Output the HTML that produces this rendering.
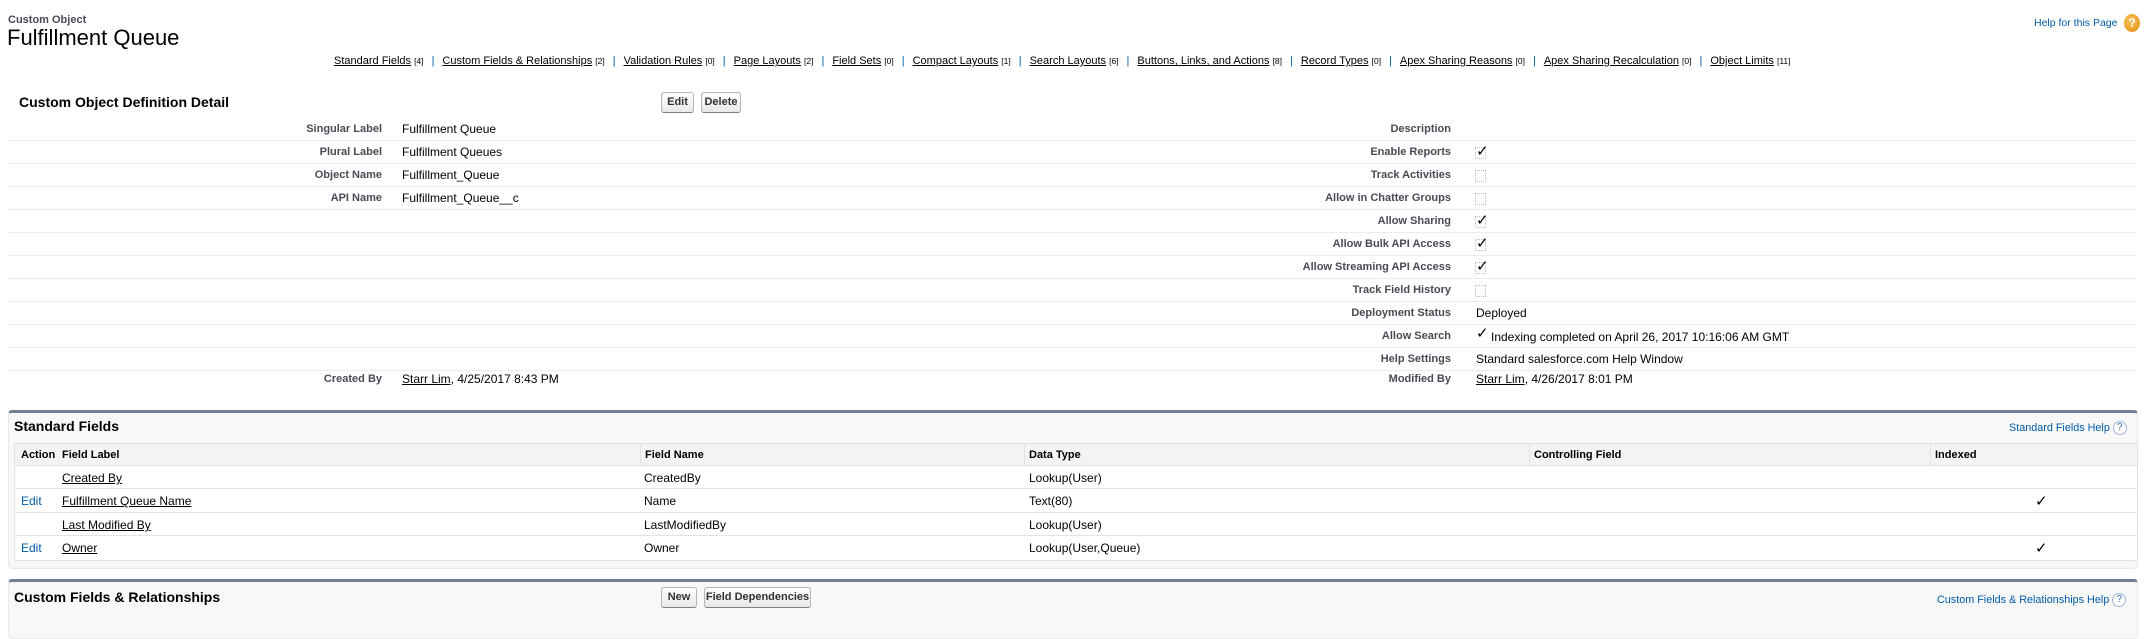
<!DOCTYPE html>
<html><head><meta charset="utf-8"><style>
*{margin:0;padding:0;box-sizing:border-box}
body{width:2144px;height:616px;background:#fff;font-family:"Liberation Sans",Arial,sans-serif;color:#000;position:relative;overflow:hidden;font-size:12px}
.a{position:absolute;white-space:nowrap}
.lnk{color:#000;text-decoration:underline}
.blue{color:#015ba7}
.btn{position:absolute;height:21px;border:1px solid #b5b5b5;border-bottom-color:#7f7f7f;border-radius:3px;background:linear-gradient(#fdfdfd,#e8e8e8);font-weight:bold;font-size:11px;color:#333;text-align:center;line-height:19px}
.row{position:absolute;left:8px;width:2128px;height:23px;border-bottom:1px solid #ececec}
.lbl{position:absolute;font-weight:bold;font-size:11px;color:#4a4a56;text-align:right;top:5px}
.val{position:absolute;top:4px;font-size:12px}
.cb{position:absolute;width:11px;height:12px;border:1px dotted #bbb}
.ck{position:absolute;font-size:15px;line-height:15px;top:-4px;left:0}
.nav{left:334px;top:55px;font-size:11px;color:#000}
.nav a{color:#000;text-decoration:underline}
.nav small{font-size:8.5px}
.nav .sep{color:#015ba7;margin:0 8px}
.box{position:absolute;left:8px;width:2130px;background:#f8f8f8;border-top:3px solid #747e96;border-radius:4px;border-left:1px solid #eaeaea;border-right:1px solid #eaeaea;border-bottom:1px solid #eaeaea}
.tbl{position:absolute;left:14px;width:2124px}
.th{position:absolute;top:443px;height:23px;background:#f2f3f3;border:1px solid #e0e3e5;font-weight:bold;font-size:11px;left:14px;width:2124px}
.th span{position:absolute;top:5px}
.th i{position:absolute;top:0;width:1px;height:22px;background:#e0e3e5}
.tr{position:absolute;left:14px;width:2124px;background:#fff;border-left:1px solid #e0e3e5;border-right:1px solid #e0e3e5;border-bottom:1px solid #e3e3e3}
.tr span{position:absolute;top:5px}
.q{display:inline-block;width:14px;height:14px;border-radius:50%;border:1px solid #9fb4d6;color:#2f6aa9;font-size:10px;line-height:12px;text-align:center;vertical-align:middle;background:#fff}
</style></head><body>
<div class="a" style="left:8px;top:14px;font-size:11px;font-weight:bold;color:#4a4a56">Custom Object</div>
<div class="a" style="left:7px;top:25px;font-size:22px;color:#000">Fulfillment Queue</div>
<div class="a blue" style="left:2034px;top:17px;font-size:10.5px">Help for this Page</div>
<div class="a" style="left:2124px;top:14px;width:16px;height:18px;border-radius:50%;background:radial-gradient(circle at 40% 35%,#f7c15a,#e38f12);color:#fff;font-weight:bold;font-size:12px;text-align:center;line-height:18px">?</div>

<div class="a nav"><a>Standard Fields</a> <small>[4]</small><span class="sep">|</span><a>Custom Fields &amp; Relationships</a> <small>[2]</small><span class="sep">|</span><a>Validation Rules</a> <small>[0]</small><span class="sep">|</span><a>Page Layouts</a> <small>[2]</small><span class="sep">|</span><a>Field Sets</a> <small>[0]</small><span class="sep">|</span><a>Compact Layouts</a> <small>[1]</small><span class="sep">|</span><a>Search Layouts</a> <small>[6]</small><span class="sep">|</span><a>Buttons, Links, and Actions</a> <small>[8]</small><span class="sep">|</span><a>Record Types</a> <small>[0]</small><span class="sep">|</span><a>Apex Sharing Reasons</a> <small>[0]</small><span class="sep">|</span><a>Apex Sharing Recalculation</a> <small>[0]</small><span class="sep">|</span><a>Object Limits</a> <small>[11]</small></div>

<div class="a" style="left:19px;top:94px;font-size:14px;font-weight:bold">Custom Object Definition Detail</div>
<div class="btn" style="left:661px;top:92px;width:33px">Edit</div>
<div class="btn" style="left:701px;top:92px;width:40px">Delete</div>

<!-- rows -->
<div class="row" style="top:118px"><div class="lbl" style="right:1754px">Singular Label</div><div class="val" style="left:394px">Fulfillment Queue</div><div class="lbl" style="right:685px">Description</div></div>
<div class="row" style="top:141px"><div class="lbl" style="right:1754px">Plural Label</div><div class="val" style="left:394px">Fulfillment Queues</div><div class="lbl" style="right:685px">Enable Reports</div><div class="cb" style="left:1467px;top:6px"><span class="ck">✓</span></div></div>
<div class="row" style="top:164px"><div class="lbl" style="right:1754px">Object Name</div><div class="val" style="left:394px">Fulfillment_Queue</div><div class="lbl" style="right:685px">Track Activities</div><div class="cb" style="left:1467px;top:6px"></div></div>
<div class="row" style="top:187px"><div class="lbl" style="right:1754px">API Name</div><div class="val" style="left:394px">Fulfillment_Queue__c</div><div class="lbl" style="right:685px">Allow in Chatter Groups</div><div class="cb" style="left:1467px;top:6px"></div></div>
<div class="row" style="top:210px"><div class="lbl" style="right:685px">Allow Sharing</div><div class="cb" style="left:1467px;top:6px"><span class="ck">✓</span></div></div>
<div class="row" style="top:233px"><div class="lbl" style="right:685px">Allow Bulk API Access</div><div class="cb" style="left:1467px;top:6px"><span class="ck">✓</span></div></div>
<div class="row" style="top:256px"><div class="lbl" style="right:685px">Allow Streaming API Access</div><div class="cb" style="left:1467px;top:6px"><span class="ck">✓</span></div></div>
<div class="row" style="top:279px"><div class="lbl" style="right:685px">Track Field History</div><div class="cb" style="left:1467px;top:6px"></div></div>
<div class="row" style="top:302px"><div class="lbl" style="right:685px">Deployment Status</div><div class="val" style="left:1468px">Deployed</div></div>
<div class="row" style="top:325px"><div class="lbl" style="right:685px">Allow Search</div><div class="cb" style="left:1467px;top:4px;border-color:transparent"><span class="ck">✓</span></div><div class="val" style="left:1483px;top:5px">Indexing completed on April 26, 2017 10:16:06 AM GMT</div></div>
<div class="row" style="top:348px"><div class="lbl" style="right:685px">Help Settings</div><div class="val" style="left:1468px">Standard salesforce.com Help Window</div></div>
<div class="row" style="top:368px;border-bottom:none"><div class="lbl" style="right:1754px">Created By</div><div class="val" style="left:394px"><span class="lnk">Starr Lim</span>, 4/25/2017 8:43 PM</div><div class="lbl" style="right:685px">Modified By</div><div class="val" style="left:1468px"><span class="lnk">Starr Lim</span>, 4/26/2017 8:01 PM</div></div>

<!-- Standard Fields -->
<div class="box" style="top:410px;height:159px"></div>
<div class="a" style="left:14px;top:418px;font-size:14px;font-weight:bold">Standard Fields</div>
<div class="a blue" style="left:2009px;top:421px;font-size:10.8px">Standard Fields Help <span class="q">?</span></div>
<div class="th"><span style="left:6px">Action</span><span style="left:47px">Field Label</span><i style="left:625px"></i><span style="left:630px">Field Name</span><i style="left:1009px"></i><span style="left:1014px">Data Type</span><i style="left:1514px"></i><span style="left:1519px">Controlling Field</span><i style="left:1915px"></i><span style="left:1920px">Indexed</span></div>
<div class="tr" style="top:466px;height:23px"><span style="left:47px" class="lnk">Created By</span><span style="left:629px">CreatedBy</span><span style="left:1014px">Lookup(User)</span></div>
<div class="tr" style="top:489px;height:24px"><span style="left:6px" class="blue">Edit</span><span style="left:47px" class="lnk">Fulfillment Queue Name</span><span style="left:629px">Name</span><span style="left:1014px">Text(80)</span><span style="left:2020px;top:3px;font-size:15px">✓</span></div>
<div class="tr" style="top:513px;height:23px"><span style="left:47px" class="lnk">Last Modified By</span><span style="left:629px">LastModifiedBy</span><span style="left:1014px">Lookup(User)</span></div>
<div class="tr" style="top:536px;height:25px"><span style="left:6px" class="blue">Edit</span><span style="left:47px" class="lnk">Owner</span><span style="left:629px">Owner</span><span style="left:1014px">Lookup(User,Queue)</span><span style="left:2020px;top:3px;font-size:15px">✓</span></div>

<!-- Custom Fields -->
<div class="box" style="top:579px;height:60px"></div>
<div class="a" style="left:14px;top:589px;font-size:14px;font-weight:bold">Custom Fields &amp; Relationships</div>
<div class="btn" style="left:661px;top:587px;width:36px">New</div>
<div class="btn" style="left:704px;top:587px;width:107px">Field Dependencies</div>
<div class="a blue" style="left:1937px;top:593px;font-size:10.8px">Custom Fields &amp; Relationships Help <span class="q">?</span></div>
</body></html>
